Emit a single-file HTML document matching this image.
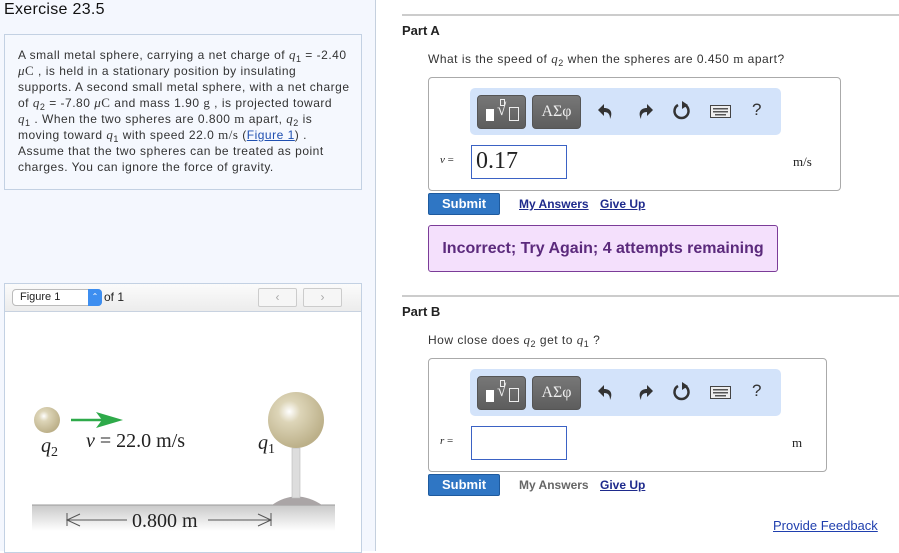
<!DOCTYPE html>
<html><head><meta charset="utf-8"><style>
*{margin:0;padding:0;box-sizing:border-box}
body{width:899px;height:551px;overflow:hidden;background:#fff;font-family:"Liberation Sans",sans-serif;color:#222;position:relative}
.a{position:absolute}
.m{font-family:"Liberation Serif",serif;font-style:italic;font-size:13px}
.mr{font-family:"Liberation Serif",serif;font-size:13px}
sub{font-size:9px;vertical-align:-3px;font-style:normal;line-height:0}
.tb{position:absolute;left:470px;width:311px;height:47px;background:#d3e3fa;border-radius:5px}
.bt{position:absolute;top:7px;height:34px;width:49px;background:linear-gradient(#777,#5d5d5d);border-radius:4px;border:1px solid #555;color:#eee}
.ic{position:absolute;top:14px}
.sub{position:absolute;left:428px;width:72px;height:22px;background:#2f76c4;border:1px solid #1e5a9e;border-radius:2px;color:#fff;font-weight:bold;font-size:13px;text-align:center;line-height:20px}
.lk{position:absolute;font-size:12px;font-weight:bold;color:#1e2a8c;text-decoration:underline}
.pl{white-space:nowrap;height:16px}
.q{letter-spacing:0.5px}
</style></head><body>
<div class="a" style="left:0;top:0;width:376px;height:551px;background:#f4f7fe;border-right:1px solid #c5d0de"></div>
<div class="a" style="left:4px;top:1px;font-size:16px;color:#111;letter-spacing:0.3px">Exercise 23.5</div>
<div class="a" style="left:4px;top:34px;width:358px;height:156px;background:#f5f8fe;border:1px solid #c3d1e3"></div>
<div class="a q" style="left:18px;top:47px;font-size:12px;line-height:16px;color:#333">
<div class="pl">A small metal sphere, carrying a net charge of <span class="m">q</span><sub>1</sub> = -2.40</div>
<div class="pl"><span class="m">μ</span><span class="mr">C</span> , is held in a stationary position by insulating</div>
<div class="pl">supports. A second small metal sphere, with a net charge</div>
<div class="pl">of <span class="m">q</span><sub>2</sub> = -7.80 <span class="m">μ</span><span class="mr">C</span> and mass 1.90 <span class="mr">g</span> , is projected toward</div>
<div class="pl"><span class="m">q</span><sub>1</sub> . When the two spheres are 0.800 <span class="mr">m</span> apart, <span class="m">q</span><sub>2</sub> is</div>
<div class="pl">moving toward <span class="m">q</span><sub>1</sub> with speed 22.0 <span class="mr">m/s</span> (<span style="color:#1f4fb0;text-decoration:underline">Figure 1</span>) .</div>
<div class="pl">Assume that the two spheres can be treated as point</div>
<div class="pl">charges. You can ignore the force of gravity.</div>
</div>

<div class="a" style="left:4px;top:283px;width:358px;height:270px;background:#fff;border:1px solid #c3d1e3"></div>
<div class="a" style="left:5px;top:284px;width:356px;height:28px;background:linear-gradient(#fbfbfb,#ececec);border-bottom:1px solid #c8d2e0"></div>
<div class="a" style="left:12px;top:289px;width:90px;height:17px;background:#fff;border:1px solid #bbb;border-radius:4px;font-size:11px;line-height:15px;padding-left:7px">Figure 1</div>
<div class="a" style="left:88px;top:289px;width:14px;height:17px;background:#3d8ef0;border-radius:0 4px 4px 0;color:#fff;font-size:8px;text-align:center;line-height:16px">⌃</div>
<div class="a" style="left:104px;top:290px;font-size:12px">of 1</div>
<div class="a" style="left:258px;top:288px;width:39px;height:19px;border:1px solid #ccc;border-radius:2px;background:#f6f6f6;color:#aaa;text-align:center;font-size:12px;line-height:17px">‹</div>
<div class="a" style="left:303px;top:288px;width:39px;height:19px;border:1px solid #ccc;border-radius:2px;background:#f6f6f6;color:#aaa;text-align:center;font-size:12px;line-height:17px">›</div>

<svg class="a" style="left:0;top:380px" width="370" height="171">
<defs>
<radialGradient id="g" cx="0.38" cy="0.35" r="0.65"><stop offset="0" stop-color="#fff"/><stop offset="0.3" stop-color="#ddd5b8"/><stop offset="1" stop-color="#bcb089"/></radialGradient>
<linearGradient id="gr" x1="0" y1="0" x2="0" y2="1"><stop offset="0" stop-color="#c9c9c9"/><stop offset="1" stop-color="#fff"/></linearGradient>
</defs>
<rect x="32" y="125" width="303" height="26" fill="url(#gr)"/>
<line x1="32" y1="125" x2="335" y2="125" stroke="#999"/>
<path d="M272 125 Q296 108 322 125Z" fill="#aaa5a6"/>
<rect x="292" y="68" width="8" height="50" fill="#ddd" stroke="#bbb" stroke-width="0.6"/>
<circle cx="296" cy="40" r="28" fill="url(#g)"/>
<circle cx="47" cy="40" r="13" fill="url(#g)"/>
<line x1="71" y1="40" x2="105" y2="40" stroke="#2eaa4a" stroke-width="2.5"/>
<path d="M96 32 L123 40 L96 48 L102 40Z" fill="#2eaa4a"/>
<text x="86" y="67" font-family="Liberation Serif" font-size="20" fill="#222"><tspan font-style="italic">v</tspan> = 22.0 m/s</text>
<text x="41" y="72" font-family="Liberation Serif" font-size="20" font-style="italic" fill="#222">q<tspan font-size="14" dy="4" font-style="normal">2</tspan></text>
<text x="258" y="69" font-family="Liberation Serif" font-size="20" font-style="italic" fill="#222">q<tspan font-size="14" dy="4" font-style="normal">1</tspan></text>
<g stroke="#555" stroke-width="1" fill="none">
<line x1="67" y1="133" x2="67" y2="146"/><line x1="67" y1="140" x2="127" y2="140"/><path d="M80 134 L67 140 L80 146"/>
<line x1="271" y1="133" x2="271" y2="146"/><line x1="208" y1="140" x2="271" y2="140"/><path d="M258 134 L271 140 L258 146"/>
</g>
<text x="132" y="147" font-family="Liberation Serif" font-size="20" fill="#222">0.800 m</text>
</svg>

<div class="a" style="left:402px;top:14px;width:497px;height:2px;background:#ccc"></div>
<div class="a" style="left:402px;top:23px;font-size:13px;font-weight:bold">Part A</div>
<div class="a q" style="left:428px;top:51px;font-size:12px;color:#333">What is the speed of <span class="m">q</span><sub>2</sub> when the spheres are 0.450 <span class="mr">m</span> apart?</div>
<div class="a" style="left:428px;top:77px;width:413px;height:114px;border:1px solid #aaa;border-radius:4px"></div>

<div class="a" style="left:402px;top:295px;width:497px;height:2px;background:#ccc"></div>
<div class="a" style="left:402px;top:304px;font-size:13px;font-weight:bold">Part B</div>
<div class="a q" style="left:428px;top:332px;font-size:12px;color:#333">How close does <span class="m">q</span><sub>2</sub> get to <span class="m">q</span><sub>1</sub> ?</div>
<div class="a" style="left:428px;top:358px;width:399px;height:114px;border:1px solid #aaa;border-radius:4px"></div>

<div class="tb" style="top:88px">
<div class="bt" style="left:7px"><div class="a" style="left:8px;top:13px;width:8px;height:12px;background:#fff"></div><span class="a" style="left:19px;top:4px;font-size:17px;font-family:'Liberation Serif',serif;color:#eee">√</span><div class="a" style="left:22px;top:3px;width:5px;height:7px;border:1px solid #eee"></div><div class="a" style="left:31px;top:11px;width:10px;height:14px;border:1px solid #eee"></div></div>
<div class="bt" style="left:62px;text-align:center;line-height:31px;font-family:'Liberation Serif',serif;font-size:16px">ΑΣφ</div>
<svg class="ic" style="left:128px" width="16" height="20" viewBox="0 0 16 20"><path d="M6 2 L0 8 L6 14 V10 C10 10 12 12 12 17 C15 11 13 6 6 6Z" fill="#333"/></svg>
<svg class="ic" style="left:167px" width="16" height="20" viewBox="0 0 16 20"><path d="M10 2 L16 8 L10 14 V10 C6 10 4 12 4 17 C1 11 3 6 10 6Z" fill="#333"/></svg>
<svg class="ic" style="left:202px;top:12px" width="20" height="22" viewBox="0 0 20 22"><path d="M13 5 A7 7 0 1 1 6 5" fill="none" stroke="#333" stroke-width="2.5"/><path d="M10 1 L16 5 L10 9Z" fill="#333"/></svg>
<svg class="ic" style="left:240px;top:17px" width="21" height="13" viewBox="0 0 21 13"><rect x="0.5" y="0.5" width="20" height="12" fill="#eee" stroke="#444"/><g fill="#555"><rect x="3" y="3" width="15" height="1.5"/><rect x="3" y="6" width="15" height="1.5"/><rect x="5" y="9" width="11" height="1.5"/></g></svg>
<div class="a" style="left:282px;top:12px;font-size:17px;color:#333">?</div>
</div>
<div class="tb" style="top:369px">
<div class="bt" style="left:7px"><div class="a" style="left:8px;top:13px;width:8px;height:12px;background:#fff"></div><span class="a" style="left:19px;top:4px;font-size:17px;font-family:'Liberation Serif',serif;color:#eee">√</span><div class="a" style="left:22px;top:3px;width:5px;height:7px;border:1px solid #eee"></div><div class="a" style="left:31px;top:11px;width:10px;height:14px;border:1px solid #eee"></div></div>
<div class="bt" style="left:62px;text-align:center;line-height:31px;font-family:'Liberation Serif',serif;font-size:16px">ΑΣφ</div>
<svg class="ic" style="left:128px" width="16" height="20" viewBox="0 0 16 20"><path d="M6 2 L0 8 L6 14 V10 C10 10 12 12 12 17 C15 11 13 6 6 6Z" fill="#333"/></svg>
<svg class="ic" style="left:167px" width="16" height="20" viewBox="0 0 16 20"><path d="M10 2 L16 8 L10 14 V10 C6 10 4 12 4 17 C1 11 3 6 10 6Z" fill="#333"/></svg>
<svg class="ic" style="left:202px;top:12px" width="20" height="22" viewBox="0 0 20 22"><path d="M13 5 A7 7 0 1 1 6 5" fill="none" stroke="#333" stroke-width="2.5"/><path d="M10 1 L16 5 L10 9Z" fill="#333"/></svg>
<svg class="ic" style="left:240px;top:17px" width="21" height="13" viewBox="0 0 21 13"><rect x="0.5" y="0.5" width="20" height="12" fill="#eee" stroke="#444"/><g fill="#555"><rect x="3" y="3" width="15" height="1.5"/><rect x="3" y="6" width="15" height="1.5"/><rect x="5" y="9" width="11" height="1.5"/></g></svg>
<div class="a" style="left:282px;top:12px;font-size:17px;color:#333">?</div>
</div>

<div class="a" style="left:440px;top:154px;font-size:11px;font-family:'Liberation Serif',serif"><i>v</i> =</div>
<div class="a" style="left:471px;top:145px;width:96px;height:34px;border:1px solid #3b62c4;font-family:'Liberation Serif',serif;font-size:24px;line-height:31px;padding-left:4px">0.17</div>
<div class="a mr" style="left:793px;top:154px;font-size:13px">m/s</div>
<div class="a" style="left:440px;top:435px;font-size:11px;font-family:'Liberation Serif',serif"><i>r</i> =</div>
<div class="a" style="left:471px;top:426px;width:96px;height:34px;border:1px solid #3b62c4"></div>
<div class="a mr" style="left:792px;top:435px;font-size:13px">m</div>

<div class="sub" style="top:193px">Submit</div>
<div class="lk" style="left:519px;top:197px">My Answers</div>
<div class="lk" style="left:600px;top:197px">Give Up</div>
<div class="a" style="left:428px;top:225px;width:350px;height:47px;background:#f4e0fc;border:1px solid #7b3c98;border-radius:3px;color:#5b2a7c;font-weight:bold;font-size:16px;text-align:center;line-height:45px">Incorrect; Try Again; 4 attempts remaining</div>

<div class="sub" style="top:474px">Submit</div>
<div class="a" style="left:519px;top:478px;font-size:12px;font-weight:bold;color:#666">My Answers</div>
<div class="lk" style="left:600px;top:478px">Give Up</div>
<div class="a" style="left:773px;top:518px;font-size:13px;color:#1f3fae;text-decoration:underline">Provide Feedback</div>
</body></html>
